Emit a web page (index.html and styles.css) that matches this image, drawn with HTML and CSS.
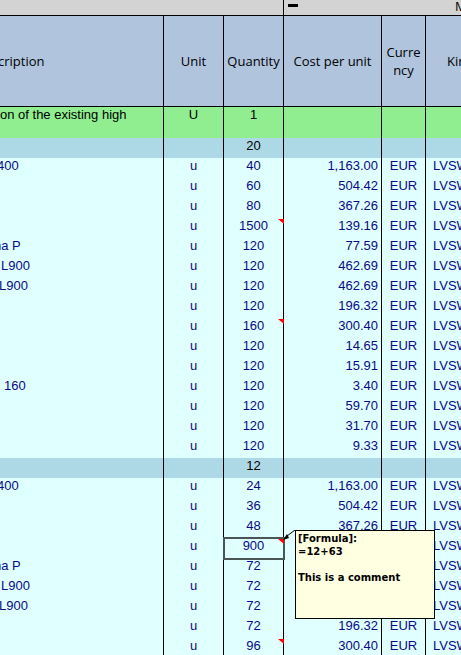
FILE: index.html
```html
<!DOCTYPE html>
<html>
<head>
<meta charset="utf-8">
<link rel="stylesheet" href="styles.css">
</head>
<body>
<div class="sheet">
  <div class="topbar">
    <div class="tb-left"></div>
    <div class="tb-right"><span class="dash"></span><span class="tb-m">M</span></div>
  </div>
  <div class="row head">
    <div class="hc desc"><span class="ind2">cription</span></div>
    <div class="hc">Unit</div>
    <div class="hc">Quantity</div>
    <div class="hc">Cost per unit</div>
    <div class="hc">Curre<br>ncy</div>
    <div class="hc">Kind</div>
  </div>
  <div class="row green">
    <div class="d"><span class="ind1">on of the existing high</span></div>
    <div class="ctr">U</div>
    <div class="ctr">1</div>
    <div></div><div></div><div></div>
  </div>
  <div class="row group">
    <div></div><div></div><div class="ctr">20</div><div></div><div></div><div></div>
  </div>
  <div class="row data"><div class="d"><span class="ind3">400</span></div><div class="ctr">u</div><div class="ctr">40</div><div class="num">1,163.00</div><div class="ctr">EUR</div><div class="kind">LVSW</div></div>
  <div class="row data"><div class="d"></div><div class="ctr">u</div><div class="ctr">60</div><div class="num">504.42</div><div class="ctr">EUR</div><div class="kind">LVSW</div></div>
  <div class="row data"><div class="d"></div><div class="ctr">u</div><div class="ctr">80</div><div class="num">367.26</div><div class="ctr">EUR</div><div class="kind">LVSW</div></div>
  <div class="row data"><div class="d"></div><div class="ctr">u</div><div class="ctr note">1500</div><div class="num">139.16</div><div class="ctr">EUR</div><div class="kind">LVSW</div></div>
  <div class="row data"><div class="d"><span class="ind7">na P</span></div><div class="ctr">u</div><div class="ctr">120</div><div class="num">77.59</div><div class="ctr">EUR</div><div class="kind">LVSW</div></div>
  <div class="row data"><div class="d"><span class="ind0">L900</span></div><div class="ctr">u</div><div class="ctr">120</div><div class="num">462.69</div><div class="ctr">EUR</div><div class="kind">LVSW</div></div>
  <div class="row data"><div class="d"><span class="ind4">L900</span></div><div class="ctr">u</div><div class="ctr">120</div><div class="num">462.69</div><div class="ctr">EUR</div><div class="kind">LVSW</div></div>
  <div class="row data"><div class="d"></div><div class="ctr">u</div><div class="ctr">120</div><div class="num">196.32</div><div class="ctr">EUR</div><div class="kind">LVSW</div></div>
  <div class="row data"><div class="d"></div><div class="ctr">u</div><div class="ctr note">160</div><div class="num">300.40</div><div class="ctr">EUR</div><div class="kind">LVSW</div></div>
  <div class="row data"><div class="d"></div><div class="ctr">u</div><div class="ctr">120</div><div class="num">14.65</div><div class="ctr">EUR</div><div class="kind">LVSW</div></div>
  <div class="row data"><div class="d"></div><div class="ctr">u</div><div class="ctr">120</div><div class="num">15.91</div><div class="ctr">EUR</div><div class="kind">LVSW</div></div>
  <div class="row data"><div class="d"><span class="pad5">160</span></div><div class="ctr">u</div><div class="ctr">120</div><div class="num">3.40</div><div class="ctr">EUR</div><div class="kind">LVSW</div></div>
  <div class="row data"><div class="d"></div><div class="ctr">u</div><div class="ctr">120</div><div class="num">59.70</div><div class="ctr">EUR</div><div class="kind">LVSW</div></div>
  <div class="row data"><div class="d"></div><div class="ctr">u</div><div class="ctr">120</div><div class="num">31.70</div><div class="ctr">EUR</div><div class="kind">LVSW</div></div>
  <div class="row data"><div class="d"></div><div class="ctr">u</div><div class="ctr">120</div><div class="num">9.33</div><div class="ctr">EUR</div><div class="kind">LVSW</div></div>
  <div class="row group">
    <div></div><div></div><div class="ctr">12</div><div></div><div></div><div></div>
  </div>
  <div class="row data"><div class="d"><span class="ind3">400</span></div><div class="ctr">u</div><div class="ctr">24</div><div class="num">1,163.00</div><div class="ctr">EUR</div><div class="kind">LVSW</div></div>
  <div class="row data"><div class="d"></div><div class="ctr">u</div><div class="ctr">36</div><div class="num">504.42</div><div class="ctr">EUR</div><div class="kind">LVSW</div></div>
  <div class="row data"><div class="d"></div><div class="ctr">u</div><div class="ctr">48</div><div class="num">367.26</div><div class="ctr">EUR</div><div class="kind">LVSW</div></div>
  <div class="row data"><div class="d"></div><div class="ctr">u</div><div class="ctr note selected">900</div><div class="num">139.16</div><div class="ctr">EUR</div><div class="kind">LVSW</div></div>
  <div class="row data"><div class="d"><span class="ind7">na P</span></div><div class="ctr">u</div><div class="ctr">72</div><div class="num">77.59</div><div class="ctr">EUR</div><div class="kind">LVSW</div></div>
  <div class="row data"><div class="d"><span class="ind0">L900</span></div><div class="ctr">u</div><div class="ctr">72</div><div class="num">462.69</div><div class="ctr">EUR</div><div class="kind">LVSW</div></div>
  <div class="row data"><div class="d"><span class="ind4">L900</span></div><div class="ctr">u</div><div class="ctr">72</div><div class="num">462.69</div><div class="ctr">EUR</div><div class="kind">LVSW</div></div>
  <div class="row data"><div class="d"></div><div class="ctr">u</div><div class="ctr">72</div><div class="num">196.32</div><div class="ctr">EUR</div><div class="kind">LVSW</div></div>
  <div class="row data"><div class="d"></div><div class="ctr">u</div><div class="ctr note">96</div><div class="num">300.40</div><div class="ctr">EUR</div><div class="kind">LVSW</div></div>

  <svg class="arrow" width="20" height="16" viewBox="0 0 20 16">
    <line x1="6" y1="6" x2="14" y2="0" stroke="#000" stroke-width="1"/>
    <polygon points="2,10 6,4 8,8" fill="#000"/>
  </svg>
  <div class="comment">[Formula]:<br>=12+63<br><br>This is a comment</div>
</div>
</body>
</html>
```

FILE: styles.css
```css
html, body {
  margin: 0;
  padding: 0;
  overflow: hidden;
}
body {
  width: 461px;
  height: 655px;
  background: #e0ffff;
}
.sheet {
  position: relative;
  width: 505px;
  font-family: "Liberation Sans", Arial, sans-serif;
  font-size: 13px;
  line-height: 15px;
  color: #000;
}
.topbar {
  display: grid;
  grid-template-columns: 283px 1fr;
  height: 15px;
  background: #d3d3d3;
  border-bottom: 1px solid #000;
}
.tb-right {
  border-left: 1px solid #000;
  display: flex;
  align-items: flex-start;
}
.dash {
  display: block;
  width: 10px;
  height: 3px;
  background: #000;
  margin: 4px 0 0 4px;
}
.tb-m {
  font-family: "Open Sans", sans-serif;
  font-size: 13px;
  line-height: 13px;
  margin-left: 157px;
  color: #000;
}
.row {
  display: grid;
  grid-template-columns: 163px 60px 60px 98px 44px 80px;
  height: 20px;
}
.row > div {
  border-left: 1px solid #000;
  white-space: nowrap;
  overflow: hidden;
  position: relative;
}
.row > div:first-child {
  border-left: 0;
}
.head {
  height: 90px;
  background: #b0c4de;
  border-bottom: 1px solid #000;
  font-family: "Open Sans", sans-serif;
  font-size: 13px;
  line-height: 18px;
}
.hc {
  display: flex;
  align-items: center;
  justify-content: center;
  text-align: center;
}
.head > div:last-child {
  justify-content: flex-start;
  padding-left: 21px;
}
.hc.desc {
  justify-content: flex-start;
}
.green {
  height: 31px;
  background: #90ee90;
}
.group {
  background: #add8e6;
}
.data {
  background: #e0ffff;
  color: #0a0a86;
}
.ctr {
  text-align: center;
}
.num {
  text-align: right;
  padding-right: 3px;
}
.kind {
  padding-left: 7px;
}
.d span {
  display: inline-block;
}
.ind0 { margin-left: 1px; }
.ind1 { margin-left: 0; }
.ind2 { margin-left: -2px; }
.ind3 { margin-left: -3px; }
.ind4 { margin-left: -1px; }
.ind7 { margin-left: -6px; }
.pad5 { margin-left: 4px; }
.row > .note {
  overflow: visible;
}
.note::before {
  content: "";
  position: absolute;
  top: 1px;
  right: -1px;
  width: 0;
  height: 0;
  border-top: 5px solid #ff0000;
  border-left: 6px solid transparent;
  z-index: 2;
}
.selected::after {
  content: "";
  position: absolute;
  top: -1px;
  left: -1px;
  right: -2px;
  bottom: -2px;
  border: 2px solid #4a5656;
  z-index: 1;
}
.arrow {
  position: absolute;
  left: 281px;
  top: 530px;
  z-index: 3;
}
.comment {
  position: absolute;
  left: 295px;
  top: 530px;
  width: 136px;
  height: 86px;
  padding: 1px 0 0 2px;
  background: #ffffe1;
  border: 1px solid #000;
  font-family: "DejaVu Sans", sans-serif;
  font-weight: bold;
  font-size: 10px;
  line-height: 13px;
  color: #000;
  z-index: 4;
}
```
